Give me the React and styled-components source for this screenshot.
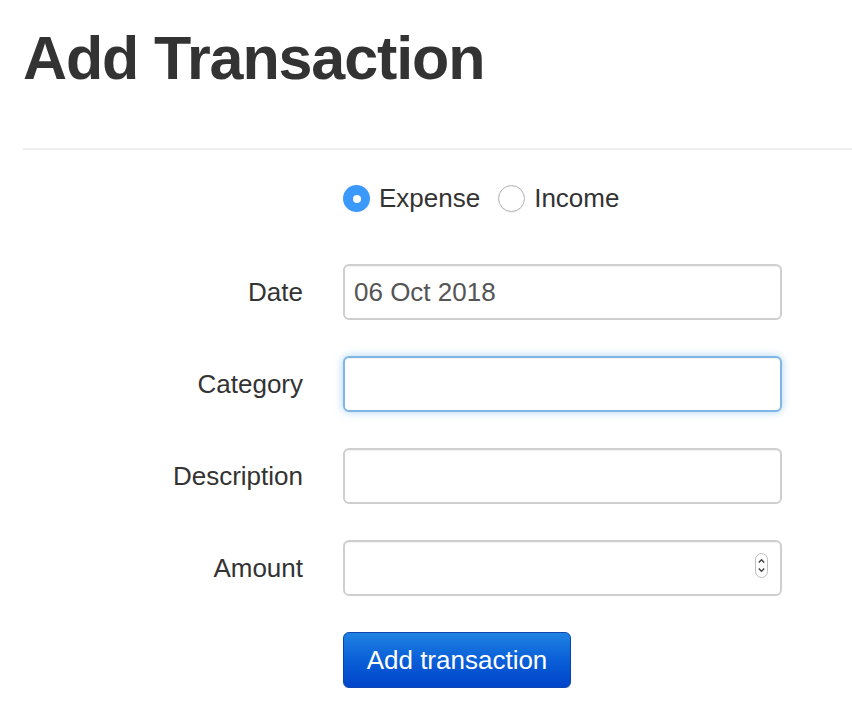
import React from 'react';
import styled, { createGlobalStyle } from 'styled-components';

const GlobalStyle = createGlobalStyle`
  html, body {
    margin: 0;
    padding: 0;
    background: #fff;
  }
  body {
    font-family: 'Liberation Sans', Arial, Helvetica, sans-serif;
    color: #333;
  }
`;

const Page = styled.div`
  padding: 28px 0 0 23px;
  overflow: hidden;
`;

const Title = styled.h1`
  margin: 0;
  font-size: 61px;
  line-height: 1;
  font-weight: bold;
  letter-spacing: -1.1px;
  color: #333;
`;

const Divider = styled.div`
  margin-top: 59px;
  height: 2px;
  background: #eeeeee;
`;

const FormGrid = styled.form`
  margin-top: 35px;
  display: grid;
  grid-template-columns: 280px 439px;
  column-gap: 40px;
  row-gap: 36px;
  align-items: center;
`;

const RadioRow = styled.div`
  grid-column: 2;
  display: flex;
  align-items: center;
  gap: 18px;
  height: 27px;
  margin-bottom: 16px;
`;

const RadioOption = styled.label`
  display: flex;
  align-items: center;
  gap: 9px;
  font-size: 26px;
  color: #333;
  cursor: pointer;
`;

const RadioDot = styled.span`
  box-sizing: border-box;
  width: 27px;
  height: 27px;
  border-radius: 50%;
  display: flex;
  align-items: center;
  justify-content: center;
  background: ${(p) => (p.checked ? '#3b99fc' : '#fff')};
  border: ${(p) => (p.checked ? 'none' : '1px solid #b4b4b4')};
  box-shadow: ${(p) => (p.checked ? 'none' : 'inset 0 1px 1px rgba(0,0,0,0.06), 0 1px 1px rgba(0,0,0,0.05)')};

  &::after {
    content: '';
    display: ${(p) => (p.checked ? 'block' : 'none')};
    width: 8px;
    height: 8px;
    border-radius: 50%;
    background: #fff;
  }
`;

const Label = styled.label`
  text-align: right;
  font-size: 26px;
  color: #333;
`;

const FieldWrap = styled.div`
  position: relative;
`;

const Input = styled.input`
  box-sizing: border-box;
  width: 100%;
  height: 56px;
  padding: 0 9px;
  font-family: 'Liberation Sans', Arial, Helvetica, sans-serif;
  font-size: 26px;
  color: #555;
  background: #fff;
  border: 2px solid ${(p) => (p.focused ? '#80b6e6' : '#cfcfcf')};
  border-radius: 6px;
  outline: none;
  box-shadow: ${(p) =>
    p.focused
      ? 'inset 0 1px 1px rgba(0,0,0,0.06), 0 0 8px rgba(102,175,233,0.55)'
      : 'inset 0 1px 1px rgba(0,0,0,0.06)'};
`;

const Spinner = styled.svg`
  position: absolute;
  right: 14px;
  top: 13px;
  width: 13px;
  height: 25px;
`;

const ButtonCell = styled.div`
  grid-column: 2;
`;

const PrimaryButton = styled.button`
  box-sizing: border-box;
  width: 228px;
  height: 56px;
  padding: 0;
  font-family: 'Liberation Sans', Arial, Helvetica, sans-serif;
  font-size: 26px;
  color: #fff;
  border: 1px solid #0a46b0;
  border-radius: 6px;
  background: linear-gradient(to bottom, #1f82e2 0%, #0a5fd8 50%, #0044c9 100%);
  box-shadow: 0 1px 1px rgba(0, 0, 0, 0.15);
  cursor: pointer;
`;

const App = () => {
  return (
    <Page>
      <GlobalStyle />
      <Title>Add Transaction</Title>
      <Divider />
      <FormGrid onSubmit={(e) => e.preventDefault()}>
        <RadioRow>
          <RadioOption>
            <RadioDot checked />
            Expense
          </RadioOption>
          <RadioOption>
            <RadioDot />
            Income
          </RadioOption>
        </RadioRow>

        <Label>Date</Label>
        <Input defaultValue='06 Oct 2018' />

        <Label>Category</Label>
        <Input focused />

        <Label>Description</Label>
        <Input />

        <Label>Amount</Label>
        <FieldWrap>
          <Input />
          <Spinner viewBox='0 0 13 25'>
            <rect x='0.5' y='0.5' width='12' height='24' rx='6' fill='#fff' stroke='#bdbdbd' />
            <path d='M3.8 9.5 L6.5 6.8 L9.2 9.5' fill='none' stroke='#444' strokeWidth='1.5' />
            <path d='M3.8 15.5 L6.5 18.2 L9.2 15.5' fill='none' stroke='#444' strokeWidth='1.5' />
          </Spinner>
        </FieldWrap>

        <ButtonCell>
          <PrimaryButton type='submit'>Add transaction</PrimaryButton>
        </ButtonCell>
      </FormGrid>
    </Page>
  );
};

export default App;
